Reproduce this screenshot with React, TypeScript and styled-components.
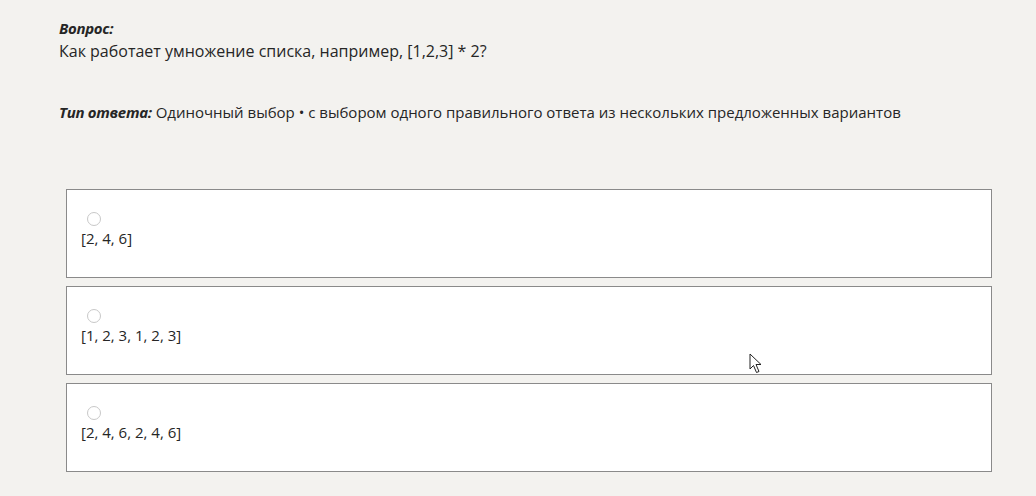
import styled, { createGlobalStyle } from "styled-components";

const GlobalStyle = createGlobalStyle`
  html, body {
    margin: 0;
    padding: 0;
    background: #f3f2ef;
  }
  body {
    font-family: "Open Sans", "Noto Sans", "Liberation Sans", sans-serif;
    color: #262626;
  }
`;

const Page = styled.div`
  width: 1036px;
  height: 496px;
  box-sizing: border-box;
  padding: 17px 44px 0 59px;
  position: relative;
  overflow: hidden;
`;

const Label = styled.span`
  font-weight: 700;
  font-style: italic;
  font-size: 15px;
  letter-spacing: -0.3px;
`;

const Block = styled.div<{ $gap: number; $size: number }>`
  font-size: ${(p) => p.$size}px;
  line-height: 23px;
  margin-bottom: ${(p) => p.$gap}px;
`;

const Options = styled.div`
  display: flex;
  flex-direction: column;
  gap: 8px;
  margin-left: 7px;
  width: 926px;
`;

const Card = styled.label`
  display: flex;
  flex-direction: column;
  align-items: flex-start;
  box-sizing: border-box;
  height: 89px;
  background: #ffffff;
  border: 1px solid #8a8a8a;
  padding: 22px 14px 0;
  cursor: pointer;
`;

const Radio = styled.span`
  width: 12px;
  height: 12px;
  border-radius: 50%;
  border: 1px solid #c8c8c8;
  margin-left: 6px;
  margin-bottom: 1px;
`;

const OptionText = styled.span`
  font-size: 15px;
  line-height: 22px;
`;

const Cursor = styled.svg`
  position: absolute;
  left: 749px;
  top: 353px;
`;

const options = ["[2, 4, 6]", "[1, 2, 3, 1, 2, 3]", "[2, 4, 6, 2, 4, 6]"];

export default function App() {
  return (
    <>
      <GlobalStyle />
      <Page>
        <Block $gap={38} $size={16}>
          <Label>Вопрос:</Label>
          <div>Как работает умножение списка, например, [1,2,3] * 2?</div>
        </Block>
        <Block $gap={65} $size={15}>
          <Label>Тип ответа:</Label> Одиночный выбор • с выбором одного
          правильного ответа из нескольких предложенных вариантов
        </Block>
        <Options>
          {options.map((o) => (
            <Card key={o}>
              <Radio />
              <OptionText>{o}</OptionText>
            </Card>
          ))}
        </Options>
        <Cursor width="14" height="21" viewBox="0 0 14 21">
          <path
            d="M1 1 L1 16 L4.5 12.5 L7.5 19.5 L10 18.5 L7 11.5 L12 11.5 Z"
            fill="#ffffff"
            stroke="#222"
            strokeWidth="1"
            strokeLinejoin="miter"
          />
        </Cursor>
      </Page>
    </>
  );
}
